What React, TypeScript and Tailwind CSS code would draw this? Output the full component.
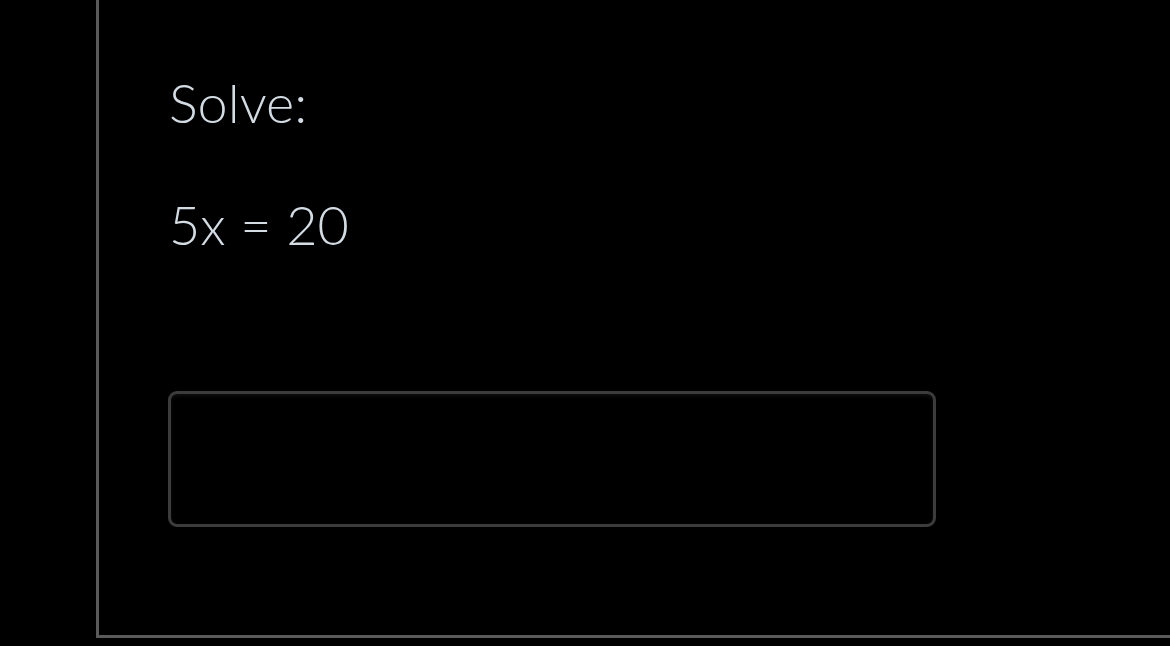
import React from 'react';

const App: React.FC = () => {
  return (
    <div className="w-[1170px] h-[646px] bg-black overflow-hidden" style={{ fontFamily: 'Lato, "Noto Sans", sans-serif' }}>
      <div className="ml-[96px] h-[638px] border-l-[3px] border-b-[3px] border-[#5a5a5a] pl-[69px] pt-[68px]">
        <p className="pl-[1px] text-[54px] leading-[70px] font-light text-[#d3dbe3]">Solve:</p>
        <p className="pl-[1px] mt-[52px] text-[54px] leading-[70px] font-light text-[#d3dbe3]">5x = 20</p>
        <input
          type="text"
          aria-label="answer"
          className="mt-[131px] block w-[768px] h-[136px] bg-black border-[3px] border-[#3c3c3c] rounded-[9px] shadow-[inset_0_2px_4px_rgba(255,255,255,0.06)] outline-none text-[#d3dbe3] text-[40px] px-4"
        />
      </div>
    </div>
  );
};

export default App;
